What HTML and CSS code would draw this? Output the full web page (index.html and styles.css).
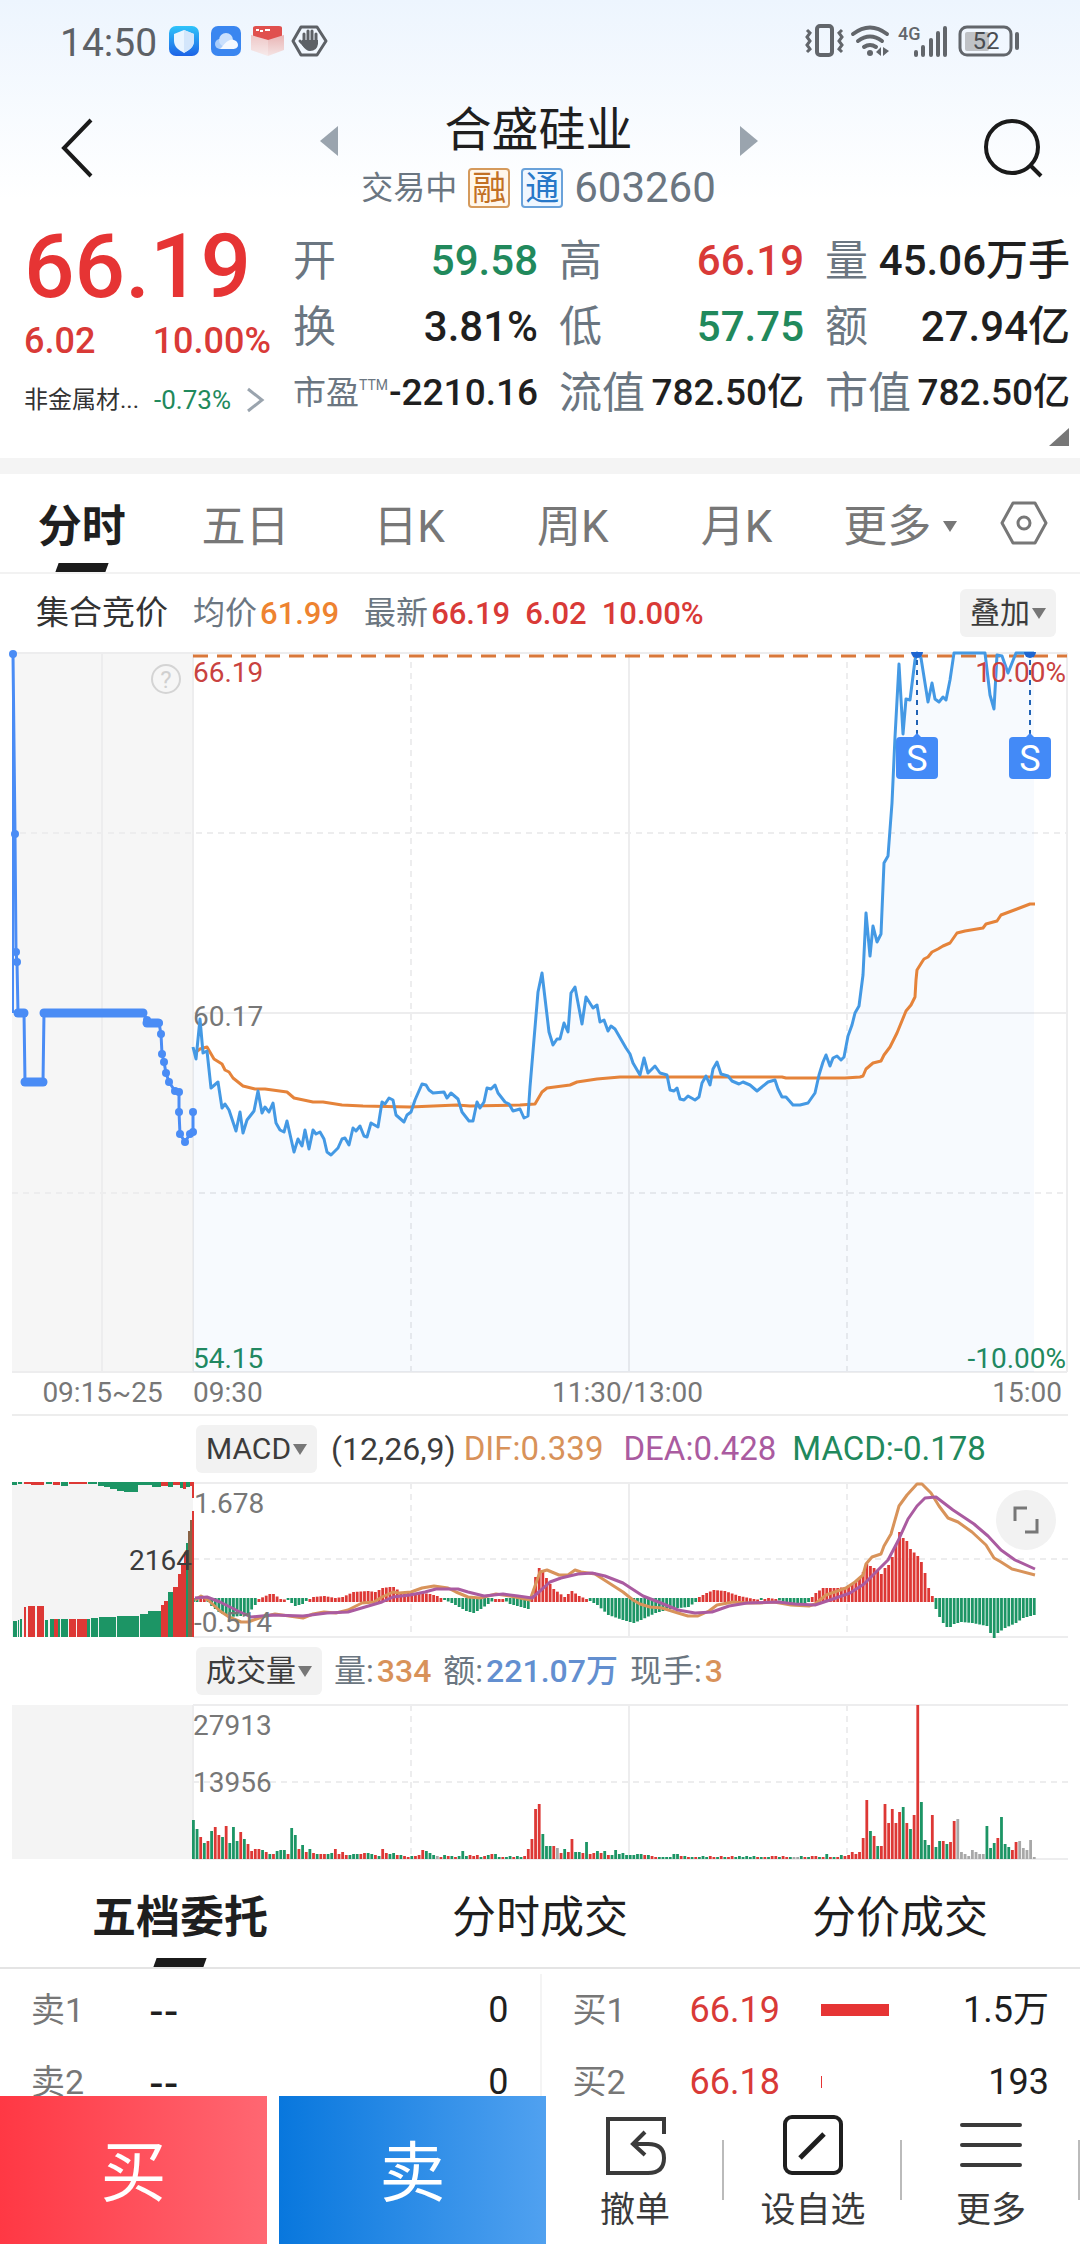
FILE: index.html
```html
<!DOCTYPE html>
<html lang="zh-CN">
<head>
  <meta charset="UTF-8">
  <meta name="viewport" content="width=device-width, initial-scale=1">
  <title>合盛硅业 603260</title>
  <link rel="stylesheet" href="styles.css">
</head>
<body>
<div class="page">

  <div class="top">
    <div class="status-bar">
      <span class="clock">14:50</span>
      <svg width="160" height="34" viewBox="0 0 160 34" aria-hidden="true">
        <defs>
          <linearGradient id="shieldBg" x1="0" y1="0" x2="0" y2="1"><stop offset="0" stop-color="#2fc4fa"/><stop offset="1" stop-color="#1d63e6"/></linearGradient>
          <linearGradient id="boxBg" x1="0" y1="0" x2="0" y2="1"><stop offset="0" stop-color="#e9b4b4"/><stop offset="1" stop-color="#f4e4e4"/></linearGradient>
        </defs>
        <rect x="0" y="2" width="30" height="30" rx="7" fill="url(#shieldBg)"/>
        <path d="M15 6 L25 10 V17 C25 23 20 26 15 29 C10 26 5 23 5 17 V10 Z" fill="#eaf5ff"/>
        <path d="M15 6 L25 10 V17 C25 23 20 26 15 29 Z" fill="#d3e6fb"/>
        <rect x="42" y="2" width="30" height="30" rx="7" fill="#3a86f0"/>
        <circle cx="51" cy="20" r="5" fill="#a9cdfb"/>
        <circle cx="57" cy="16" r="7" fill="#c9e0fd"/>
        <path d="M50 25 C53 25 55 18 61 16 C66 15 69 18 69 21 C69 24 66 25 64 25 Z" fill="#f4f9ff"/>
        <path d="M84 4 Q84 2 87 2 H110 Q113 2 113 4 V16 H84 Z" fill="#e0504e"/>
        <path d="M87 6 h3 M91 7 h3 M96 6 h5" stroke="#fff" stroke-width="2"/>
        <path d="M82 11 L99 16 L115 11 V26 L99 32 L82 26 Z" fill="url(#boxBg)"/>
        <path d="M82 11 L99 16 V32 L82 26 Z" fill="#fff" opacity="0.25"/>
        <path d="M132 3 H148 L157 17 L148 31 H132 L124 17 Z" fill="none" stroke="#5d6166" stroke-width="3" stroke-linejoin="round"/>
        <path d="M135 17 V10 M139 17 V7 M143 17 V7 M147 17 V10 M131 17 L136 22" stroke="#5d6166" stroke-width="3" stroke-linecap="round"/>
        <path d="M133 16 H149 V20 Q148 27 141 27 Q137 27 133 21 Z" fill="#5d6166"/>
      </svg>
      <svg class="status-right" width="216" height="36" viewBox="0 0 216 36" aria-hidden="true">
        <g fill="none" stroke="#62666b">
          <rect x="13" y="3" width="15" height="29" rx="3" stroke-width="4"/>
          <path d="M3 7 l3 3 -3 4 3 4 -3 4 3 4 -3 3 M38 7 l-3 3 3 4 -3 4 3 4 -3 4 3 3" stroke-width="3"/>
          <path d="M49 11 Q66 -2 83 11 M54 18 Q66 9 78 18 M60 24 Q66 20 72 24" stroke-width="4" stroke-linecap="round"/>
          <path d="M112 29 V32 M119 24 V32 M127 17 V32 M134 10 V32 M141 5 V32" stroke-width="4" stroke-linecap="round"/>
          <rect x="156" y="4" width="51" height="28" rx="7" stroke-width="3"/>
          <path d="M213 11 V25" stroke-width="4" stroke-linecap="round"/>
        </g>
        <circle cx="66" cy="30" r="3" fill="#62666b"/>
        <path d="M72 29 l5 -5 v9 M79 24 l6 4 -6 5 Z" fill="#62666b"/>
        <rect x="161" y="9" width="24" height="19" rx="2" fill="#bfc2c6"/>
        <text class="net" x="94" y="17">4G</text>
        <text class="battery" x="182" y="26">52</text>
      </svg>
    </div>

    <header class="header">
      <button class="icon-btn" aria-label="返回">
        <svg width="34" height="60" viewBox="0 0 34 60"><path d="M31 2 L4 30 L31 58" fill="none" stroke="#1a1a1a" stroke-width="4"/></svg>
      </button>
      <div class="stock">
        <button class="icon-btn" aria-label="上一只"><svg width="18" height="30" viewBox="0 0 18 30"><path d="M18 0 V30 L0 15 Z" fill="#9aa4ae"/></svg></button>
        <div class="stock-name">
          <h1>合盛硅业</h1>
          <div class="stock-sub">
            <span>交易中</span>
            <span class="badge badge-orange">融</span>
            <span class="badge badge-blue">通</span>
            <span class="code">603260</span>
          </div>
        </div>
        <button class="icon-btn" aria-label="下一只"><svg width="18" height="30" viewBox="0 0 18 30"><path d="M0 0 V30 L18 15 Z" fill="#9aa4ae"/></svg></button>
      </div>
      <button class="icon-btn" aria-label="搜索">
        <svg width="62" height="62" viewBox="0 0 62 62"><circle cx="29" cy="29" r="26" fill="none" stroke="#1a1a1a" stroke-width="4"/><path d="M47 47 L58 58" stroke="#1a1a1a" stroke-width="4"/></svg>
      </button>
    </header>
  </div>

  <section class="quote">
    <div class="quote-main">
      <div class="price">66.19</div>
      <div class="change"><span>6.02</span><span>10.00%</span></div>
      <a class="sector" href="#sector">
        <span>非金属材...</span>
        <span class="sector-change green">-0.73%</span>
        <svg width="18" height="26" viewBox="0 0 18 26"><path d="M2 2 L16 13 L2 24" fill="none" stroke="#9aa4ae" stroke-width="3"/></svg>
      </a>
    </div>
    <dl class="quote-grid">
      <div class="cell"><dt>开</dt><dd class="green">59.58</dd></div>
      <div class="cell"><dt>高</dt><dd class="red">66.19</dd></div>
      <div class="cell"><dt>量</dt><dd>45.06万手</dd></div>
      <div class="cell"><dt>换</dt><dd>3.81%</dd></div>
      <div class="cell"><dt>低</dt><dd class="green">57.75</dd></div>
      <div class="cell"><dt>额</dt><dd>27.94亿</dd></div>
      <div class="cell small"><dt class="ttm">市盈<sup>TTM</sup></dt><dd>-2210.16</dd></div>
      <div class="cell small"><dt>流值</dt><dd>782.50亿</dd></div>
      <div class="cell small"><dt>市值</dt><dd>782.50亿</dd></div>
    </dl>
    <svg class="expand-corner" width="20" height="18" viewBox="0 0 20 18"><path d="M20 0 V18 H0 Z" fill="#777"/></svg>
  </section>

  <nav class="periods">
    <button class="period active">分时</button>
    <button class="period">五日</button>
    <button class="period">日K</button>
    <button class="period">周K</button>
    <button class="period">月K</button>
    <button class="period">更多<i class="caret"></i></button>
    <button class="gear" aria-label="设置">
      <svg width="50" height="44" viewBox="0 0 50 44"><path d="M14 2 H36 L47 22 L36 42 H14 L3 22 Z" fill="none" stroke="#777" stroke-width="3" stroke-linejoin="round"/><circle cx="25" cy="22" r="6" fill="none" stroke="#777" stroke-width="3"/></svg>
    </button>
  </nav>

  <div class="info">
    <span class="auction">集合竞价</span>
    <span class="info-item">均价<b class="orange">61.99</b></span>
    <span class="info-item">最新<b class="red">66.19</b><b class="red">6.02</b><b class="red">10.00%</b></span>
    <button class="tag">叠加<i class="caret"></i></button>
  </div>

  <svg class="chart" id="priceChart" viewBox="0 0 1080 721">
    <rect x="12" y="1" width="181" height="720" fill="#f6f6f6"/>
    <g class="grid">
      <path d="M12 1 H1067 M193 361 H1067 M12 720 H1067 M102 1 V720 M193 1 V720 M629 1 V720 M1067 1 V720"/>
      <path class="dash" d="M20 181 H1067 M12 541 H1067 M411 10 V720 M847 10 V720"/>
    </g>
    <polyline class="limit" points="193,4 1067,4"/>
    <text class="axis red-text" x="193" y="30">66.19</text>
    <text class="axis" x="193" y="374">60.17</text>
    <text class="axis green-text" x="193" y="716">54.15</text>
    <text class="axis green-text" x="1066" y="716" text-anchor="end">-10.00%</text>
    <circle cx="166" cy="27" r="14" fill="none" stroke="#d4d4d4" stroke-width="2"/>
    <text class="help" x="166" y="36" text-anchor="middle">?</text>
  </svg>
  <div class="times">
    <span class="time-auction">09:15~25</span>
    <div class="time-day">
      <span>09:30</span>
      <span>11:30/13:00</span>
      <span>15:00</span>
    </div>
  </div>

  <div class="indicator">
    <button class="tag">MACD<i class="caret"></i></button>
    <span class="params">(12,26,9)</span>
    <span class="value dif">DIF:0.339</span>
    <span class="value dea">DEA:0.428</span>
    <span class="value green">MACD:-0.178</span>
  </div>
  <div class="chart-wrap">
    <svg class="chart" id="macdChart" viewBox="0 0 1080 156">
      <rect x="12" y="0" width="181" height="155" fill="#f4f4f4"/>
      <g class="grid">
        <path d="M12 1 H1068 M193 155 H1068 M629 1 V155"/>
        <path class="dash" d="M193 77 H1068 M411 1 V155 M847 1 V155"/>
      </g>
    </svg>
    <button class="fullscreen" aria-label="全屏">
      <svg width="26" height="28" viewBox="0 0 26 28"><path d="M2 15 V2 H14 M24 13 V26 H12" fill="none" stroke="#777" stroke-width="3"/></svg>
    </button>
  </div>

  <div class="indicator volume-row">
    <button class="tag">成交量<i class="caret"></i></button>
    <span>量:<b class="dif">334</b></span>
    <span>额:<b class="blue">221.07万</b></span>
    <span>现手:<b class="dif">3</b></span>
  </div>
  <svg class="chart" id="volumeChart" viewBox="0 0 1080 156">
    <rect x="12" y="1" width="181" height="154" fill="#f4f4f4"/>
    <g class="grid">
      <path d="M193 1 H1068 M193 155 H1068 M193 1 V155 M629 1 V155"/>
      <path class="dash" d="M193 78 H1068 M411 1 V155 M847 1 V155"/>
    </g>
    <text class="axis" x="193" y="31">27913</text>
    <text class="axis" x="193" y="88">13956</text>
  </svg>

  <nav class="deal-tabs">
    <button class="deal-tab active">五档委托</button>
    <button class="deal-tab">分时成交</button>
    <button class="deal-tab">分价成交</button>
  </nav>

  <div class="orders">
    <table class="sell-orders">
      <tr><th scope="row">卖1</th><td class="order-price empty">--</td><td class="order-count">0</td></tr>
      <tr><th scope="row">卖2</th><td class="order-price empty">--</td><td class="order-count">0</td></tr>
    </table>
    <table class="buy-orders">
      <tr><th scope="row">买1</th><td class="order-price red">66.19</td><td><div class="depth" style="width: 68px"></div></td><td class="order-count">1.5万</td></tr>
      <tr><th scope="row">买2</th><td class="order-price red">66.18</td><td><div class="depth" style="width: 1px"></div></td><td class="order-count">193</td></tr>
    </table>
  </div>

  <footer class="actions">
    <button class="trade buy">买</button>
    <button class="trade sell">卖</button>
    <div class="tools">
      <button class="tool">
        <svg width="62" height="62" viewBox="0 0 62 62"><path d="M60 20 V5 H4 V59 H44 Q60 59 60 44 Q60 30 44 30 H29 M41 18 L29 30 L41 41" fill="none" stroke="#3a3a3a" stroke-width="4"/></svg>
        撤单
      </button>
      <button class="tool">
        <svg width="62" height="62" viewBox="0 0 62 62"><rect x="3" y="3" width="56" height="56" rx="7" fill="none" stroke="#1f1f1f" stroke-width="4"/><path d="M18 44 L42 20" stroke="#1f1f1f" stroke-width="5"/></svg>
        设自选
      </button>
      <button class="tool">
        <svg width="62" height="62" viewBox="0 0 62 62"><path d="M2 11 H60 M2 31 H60 M2 51 H60" stroke="#3a3a3a" stroke-width="4" stroke-linecap="round"/></svg>
        更多
      </button>
    </div>
  </footer>

</div>

<script>
  const NS = 'http://www.w3.org/2000/svg';
  const RED = '#dd3835';
  const GREEN = '#1c9565';
  const GRAY = '#a8a8a8';
  const LEFT = 193;      // x of 09:30
  const STEP = 3.64;     // width of one minute

  function add(svg, tag, attrs, text) {
    const el = document.createElementNS(NS, tag);
    for (const key in attrs) el.setAttribute(key, attrs[key]);
    if (text) el.textContent = text;
    svg.appendChild(el);
    return el;
  }

  function line(svg, points, color, width) {
    return add(svg, 'polyline', { points, fill: 'none', stroke: color, 'stroke-width': width, 'stroke-linejoin': 'round' });
  }

  // ---- price ----
  const priceChart = document.getElementById('priceChart');
  const auction = '13,2 15,182 16,300 17,310 18,361 24,361 25,430 43,430 44,361 143,361 147,368 159,371 161,382 162,402 164,410 166,421 169,430 175,439 179,440 179,460 180,482 185,490 190,482 193,480 193,460';
  const price = '193,395 196,407 200,367 203,401 207,399 211,436 218,430 222,456 225,452 229,458 236,479 240,460 243,481 247,468 254,459 258,439 262,461 265,455 269,460 273,451 276,471 280,478 284,480 287,469 294,500 298,487 302,494 305,478 309,497 313,478 316,482 320,480 324,487 327,500 331,503 338,496 342,487 345,486 349,493 353,476 356,479 360,474 364,484 367,485 371,471 378,475 382,450 385,452 389,446 393,448 396,463 404,470 407,463 411,460 415,448 422,432 426,433 429,438 433,441 444,440 447,446 451,441 458,447 462,460 469,469 473,469 477,450 480,456 484,450 487,436 491,437 495,433 498,441 505,450 509,452 513,459 520,457 524,466 528,464 530,435 538,340 542,321 549,380 553,393 557,387 560,387 564,371 568,380 571,341 575,335 582,372 586,345 593,356 597,353 600,370 604,368 608,379 611,374 615,377 626,396 630,402 633,411 640,423 644,406 648,421 655,414 660,421 667,423 670,438 674,439 677,436 680,447 684,448 688,444 695,448 699,445 702,431 706,424 710,433 713,417 717,410 721,422 728,424 732,429 739,432 743,430 750,433 757,439 768,430 775,428 778,437 782,445 786,445 793,453 800,453 808,451 815,441 819,423 823,410 826,403 830,414 833,406 837,404 841,408 844,405 848,384 852,373 855,361 859,354 863,323 866,261 870,304 873,274 877,290 881,282 884,211 888,204 892,151 895,85 899,12 903,82 906,47 910,48 915,8 917,1 921,6 928,50 932,31 935,47 939,50 943,45 946,48 950,28 954,1 985,1 990,43 994,57 997,3 1002,4 1008,21 1016,1 1034,1';
  const average = '196,400 200,397 207,395 214,407 222,412 225,418 229,420 233,426 243,434 255,437 265,437 287,440 294,446 313,450 323,450 342,453 363,454 410,455 457,453 470,454 520,453 535,452 542,440 547,436 570,433 577,430 597,427 620,425 650,425 782,425 786,426 845,426 860,425 863,424 866,417 873,411 881,409 884,403 890,395 897,381 906,359 911,353 915,345 916,328 917,318 922,310 924,307 928,305 932,300 938,297 943,294 950,291 957,281 965,279 983,276 986,272 997,269 1001,263 1017,257 1030,252 1035,252';

  add(priceChart, 'polygon', { points: price + ' 1034,720 193,720', fill: '#2a8ae6', 'fill-opacity': 0.04 });
  line(priceChart, '13,2 13,361', '#4a8cf5', 2);
  line(priceChart, auction, '#4a8cf5', 3);
  auction.split(' ').forEach(p => {
    const [cx, cy] = p.split(',');
    add(priceChart, 'circle', { cx, cy, r: 4, fill: '#4a8cf5' });
  });
  [[18, 24, 361], [25, 43, 430], [44, 143, 361], [147, 158, 371]].forEach(([x1, x2, y]) => {
    line(priceChart, `${x1},${y} ${x2},${y}`, '#4a8cf5', 9).setAttribute('stroke-linecap', 'round');
  });
  line(priceChart, average, '#e5833a', 3);
  line(priceChart, price, '#4499e4', 3);

  // sell marks
  [917, 1030].forEach(x => {
    add(priceChart, 'path', { d: `M${x - 6} 0 a6 6 0 0 0 12 0 Z`, fill: '#1f66d0' });
    add(priceChart, 'path', { d: `M${x} 8 V82`, stroke: '#2163b5', 'stroke-width': 2, 'stroke-dasharray': '5 5' });
    add(priceChart, 'path', { d: `M${x - 5} 86 l5 -5 l5 5 Z`, fill: '#438af7' });
    add(priceChart, 'rect', { x: x - 21, y: 85, width: 42, height: 42, rx: 4, fill: '#438af7' });
    add(priceChart, 'text', { x, y: 119, class: 'mark', 'text-anchor': 'middle' }, 'S');
  });
  add(priceChart, 'text', { x: 1066, y: 30, class: 'axis red-text', 'text-anchor': 'end' }, '10.00%');

  // ---- MACD ----
  const macdChart = document.getElementById('macdChart');
  const ZERO = 118;
  // [minute, height] knots of the histogram
  const macd = [[0,-2],[1,-2],[2,2],[3,2],[4,-2],[5,-6],[7,-12],[10,-17],[13,-16],[15,-14],[17,-5],[18,1],[21,6],[22,6],[24,1],[26,0],[28,-6],[30,-4],[31,-1],[33,3],[36,4],[39,2],[41,3],[44,8],[48,9],[50,8],[52,12],[54,13],[55,13],[57,8],[60,7],[63,7],[65,6],[67,4],[69,0],[71,-3],[75,-11],[77,-13],[79,-9],[81,-4],[83,1],[85,1],[87,-4],[90,-7],[92,-9],[93,3],[94,23],[95,32],[96,28],[98,16],[99,11],[102,3],[104,9],[106,4],[108,1],[109,-1],[111,-5],[114,-15],[118,-20],[121,-23],[123,-20],[127,-13],[131,-9],[136,-7],[138,-2],[139,3],[141,7],[143,10],[146,9],[150,4],[154,1],[156,0],[158,2],[160,1],[162,-2],[166,-6],[169,-2],[170,3],[171,7],[173,12],[177,12],[179,13],[181,16],[183,22],[184,28],[185,36],[187,32],[189,26],[190,32],[191,35],[192,43],[193,55],[194,68],[195,62],[196,59],[197,51],[199,44],[200,38],[201,27],[202,12],[203,4],[204,-9],[205,-17],[206,-23],[207,-27],[208,-27],[209,-24],[211,-22],[214,-23],[218,-26],[219,-33],[220,-38],[221,-33],[223,-28],[226,-23],[228,-18],[230,-16],[231,-15]];
  for (let k = 0; k < macd.length; k++) {
    const [start, from] = macd[k];
    const [end, to] = macd[k + 1] || [start + 1, from];
    for (let i = start; i < end; i++) {
      const v = from + (to - from) * (i - start) / (end - start);
      const up = v > 0;
      add(macdChart, 'rect', {
        x: LEFT + i * STEP - 1, width: 2.8,
        y: up ? ZERO - v : ZERO - 2, height: Math.abs(v) + 2,
        fill: up ? RED : GREEN
      });
    }
  }

  // call auction bars: [x1, x2, height, color], first from the top, then from the bottom
  const auctionTop = [[12,17,3,GREEN],[18,22,2,GREEN],[24,31,2,RED],[31,44,3,RED],[46,52,2,GREEN],[53,60,3,RED],[61,68,4,GREEN],[69,87,2,RED],[88,97,2,GREEN],[98,104,4,GREEN],[104,110,5,GREEN],[110,117,7,GREEN],[117,124,9,GREEN],[124,138,10,GREEN],[138,152,3,GREEN],[152,161,5,GREEN],[161,168,4,RED],[168,173,5,GREEN],[173,180,3,RED],[180,183,6,GREEN],[183,186,7,RED],[186,190,5,GREEN],[190,192,4,RED],[192,194,16,RED]];
  const auctionBottom = [[13,17,16,GREEN],[18,19,17,GREEN],[20,22,18,GREEN],[24,26,30,RED],[28,35,31,RED],[37,44,31,RED],[45,48,17,GREEN],[50,54,18,GREEN],[54,58,18,RED],[58,60,18,GREEN],[61,68,18,GREEN],[69,76,18,RED],[77,87,18,RED],[87,90,18,GREEN],[91,98,19,GREEN],[99,116,20,GREEN],[117,139,21,GREEN],[140,148,23,GREEN],[148,161,26,GREEN],[161,164,32,RED],[164,168,36,RED],[168,173,45,GREEN],[173,178,50,RED],[178,181,63,RED],[181,184,72,RED],[184,186,85,RED],[186,188,94,GREEN],[188,190,106,'#8a6245'],[190,192,117,'#8a6245'],[192,194,126,RED]];
  auctionTop.forEach(([x1, x2, h, fill]) => add(macdChart, 'rect', { x: x1, y: 0, width: x2 - x1, height: h, fill }));
  auctionBottom.forEach(([x1, x2, h, fill]) => add(macdChart, 'rect', { x: x1, y: 155 - h, width: x2 - x1, height: h, fill }));

  line(macdChart, '195,118 201,114 208,118 220,129 229,135 241,140 248,140 262,135 275,132 289,134 303,136 313,132 324,130 336,131 348,128 362,121 374,120 382,115 393,110 399,111 411,110 422,106 434,104 448,106 456,110 468,115 480,116 496,112 510,114 530,118 535,104 540,90 547,88 559,93 568,93 575,88 581,90 595,92 609,101 623,110 633,118 640,122 650,125 662,126 678,131 688,134 698,134 709,129 717,123 733,120 747,121 760,121 774,120 791,123 809,124 815,122 826,113 846,106 855,100 863,93 866,82 872,75 881,72 884,64 891,52 899,24 907,13 917,2 922,2 931,11 939,24 948,36 958,40 972,50 986,63 994,76 1001,80 1012,87 1035,93', '#d8935a', 3);
  line(macdChart, '195,116 207,115 220,120 238,129 251,135 272,133 303,134 327,131 348,130 365,125 382,120 393,115 410,113 425,110 436,107 458,107 468,110 484,114 503,112 518,114 532,116 540,109 550,100 561,96 578,92 592,91 605,94 623,101 643,114 661,121 678,128 695,131 712,130 729,124 747,121 778,120 795,122 815,123 833,117 850,111 864,102 876,90 888,78 898,59 908,37 917,24 925,16 936,15 953,28 974,42 988,54 1001,68 1015,78 1035,87', '#aa5ba0', 3);
  add(macdChart, 'text', { x: 194, y: 31, class: 'axis' }, '1.678');
  add(macdChart, 'text', { x: 194, y: 150, class: 'axis' }, '-0.514');
  add(macdChart, 'text', { x: 192, y: 88, class: 'axis dark-text', 'text-anchor': 'end' }, '2164');

  // ---- volume: height + r/g/x (up, down, flat) for every minute ----
  const volumeChart = document.getElementById('volumeChart');
  const volume = ('39g 30g 22r 16g 18r 28g 32r 24r 22g 33r 16g 32g 18g 27r 20g 15r 8r 10r 10r 9g 7r 5g 5r 8g 9g 9g 5r 31g 24g 10r 14g 7r 10g 6r 5g 5r 5r 5g 6g 10r ' +
    '5r 7r 4r 4g 5g 5g 5r 6r 6g 5g 4r 3g 10r 6r 5g 6g 4r 4g 3r 2r 3g 3r 4r 9r 8g 6g 4g 3x 2r 4g 3r 3g 2r 3g 8g 3g 4r 3r 4r 2g 3r 4g 5r 5g 2g 2r 2g 3g 2r 3g 2g 3r ' +
    '10r 20r 50r 55r 25g 13g 13g 13r 11x 6r 10g 7r 20r 7g 7g 6r 17g 5r 6r 8g 6r 8g 4r 4g 9g 5g 6g 4g 4g 4g 5g 5g 4r 4g 3r 2r 2g 2g 2g 2g 5g 5g 3r 3g 2r 2g 2r 2g 3g 2g ' +
    '3r 2r 2g 3r 2g 2r 3r 2g 3g 2g 3g 2g 3g 2r 2g 2r 2g 3r 3r 2g 3r 2r 2g 2x 2x 3g 2r 2g 3r 3r 2g 2r 5g 2r 2g 2r 4g 3r 4r 7r 5r 7r 21r 59r 28g 23r 13g 13r 55r 36r 50r 36r 47r 52g ' +
    '36r 30g 44r 154r 57g 19g 14g 44r 12g 18g 18r 15g 17r 38r 40x 7x 5x 3x 9x 7x 5x 5x 33g 11g 16g 21r 42g 15g 12g 9r 17r 18x 11x 9x 19x 2x').split(' ');
  const colors = { r: RED, g: GREEN, x: GRAY };
  volume.forEach((item, i) => {
    const h = parseInt(item);
    add(volumeChart, 'rect', { x: LEFT + i * STEP - 1, y: 155 - h, width: 2.8, height: h, fill: colors[item.slice(-1)] });
  });
</script>
</body>
</html>
```
FILE: styles.css
```css
* {
  box-sizing: border-box;
}

body {
  margin: 0;
  background: #fff;
  color: #1f1f1f;
  font-family: Roboto, "Noto Sans CJK SC", sans-serif;
}

button {
  margin: 0;
  padding: 0;
  border: 0;
  background: none;
  color: inherit;
  font: inherit;
}

svg {
  display: block;
  overflow: visible;
}

.page {
  display: flex;
  flex-direction: column;
  height: 100vh;
  overflow: hidden;
}

.page > * {
  flex-shrink: 0;
}

.red { color: #d93a37; }
.green { color: #21895c; }
.orange { color: #ee8330; }
.blue { color: #638fd0; }
.dif { color: #d8925a; }
.dea { color: #aa5ba0; }

.caret {
  display: inline-block;
  border: 7px solid transparent;
  border-top: 11px solid #777;
  border-bottom: 0;
}

/* status bar + header */
.top {
  height: 222px;
  background: linear-gradient(#edf5fe, #fff 90%);
}

.status-bar {
  display: flex;
  align-items: center;
  gap: 12px;
  height: 82px;
  padding: 0 60px;
}

.clock {
  font-size: 39px;
  line-height: 44px;
  color: #5d6166;
  padding-top: 4px;
}

.status-right {
  margin-left: auto;
}

.net {
  font-size: 18px;
  font-weight: 500;
  fill: #62666b;
}

.battery {
  font-size: 24px;
  fill: #4a4d51;
  text-anchor: middle;
}

.header {
  display: flex;
  justify-content: space-between;
  align-items: flex-start;
  padding: 18px 35px 0 60px;
}

.header > .icon-btn {
  padding-top: 18px;
}

.stock {
  display: flex;
  align-items: flex-start;
  gap: 23px;
}

.stock > .icon-btn {
  padding-top: 26px;
}

.stock-name {
  width: 356px;
  text-align: center;
}

h1 {
  margin: 0;
  font-size: 47px;
  font-weight: 400;
  line-height: 60px;
}

.stock-sub {
  display: flex;
  justify-content: center;
  align-items: center;
  gap: 11px;
  height: 56px;
  font-size: 32px;
  line-height: 40px;
  color: #6b7681;
  white-space: nowrap;
}

.badge {
  width: 42px;
  height: 40px;
  border: 2px solid;
  border-radius: 4px;
  font-size: 34px;
  line-height: 36px;
}

.badge-orange {
  border-color: #d59a5c;
  background: #fff7ec;
  color: #c27024;
}

.badge-blue {
  border-color: #6aa2da;
  background: #f0f7ff;
  color: #2878c8;
}

.code {
  font-size: 42px;
}

/* quote */
.quote {
  position: relative;
  display: flex;
  gap: 22px;
  height: 252px;
  padding: 0 10px 0 24px;
  border-bottom: 16px solid #f4f4f4;
}

.quote-main {
  width: 247px;
}

.price {
  font-size: 89px;
  font-weight: 500;
  line-height: 90px;
  color: #e63434;
}

.change {
  display: flex;
  justify-content: space-between;
  font-size: 36px;
  font-weight: 500;
  line-height: 58px;
  color: #d93a37;
  white-space: nowrap;
}

.sector {
  display: flex;
  justify-content: space-between;
  align-items: center;
  height: 60px;
  padding-right: 7px;
  font-size: 24px;
  line-height: 60px;
  color: #333;
  text-decoration: none;
  white-space: nowrap;
}

.sector-change {
  font-size: 26px;
}

.quote-grid {
  flex: 1;
  display: grid;
  grid-template-columns: repeat(3, 1fr);
  grid-auto-rows: 66px;
  column-gap: 21px;
  margin: 0;
  padding-top: 6px;
}

.cell {
  display: flex;
  justify-content: space-between;
  align-items: center;
  min-width: 0;
  white-space: nowrap;
}

.cell dt {
  font-size: 43px;
  line-height: 66px;
  color: #6b7681;
}

.cell dd {
  margin: 0;
  font-size: 42px;
  font-weight: 500;
  line-height: 66px;
}

.cell.small dd {
  font-size: 37px;
}

.cell dt.ttm {
  font-size: 33px;
}

.ttm sup {
  font-size: 14px;
  line-height: 14px;
  vertical-align: 14px;
}

.expand-corner {
  position: absolute;
  right: 11px;
  bottom: 12px;
}

/* period tabs */
.periods {
  display: flex;
  align-items: stretch;
  height: 100px;
  padding-right: 14px;
  border-bottom: 2px solid #f2f2f2;
}

.period {
  flex: 1;
  position: relative;
  font-size: 44px;
  color: #777;
  white-space: nowrap;
}

.period .caret {
  margin-left: 12px;
  vertical-align: 10px;
}

.active {
  font-weight: 700;
  color: #1f1f1f;
}

.active::after {
  content: "";
  position: absolute;
  left: 50%;
  bottom: 0;
  width: 50px;
  height: 9px;
  margin-left: -25px;
  background: #1b1b1b;
  transform: skewX(-20deg);
}

.gear {
  width: 84px;
}

.gear svg {
  margin: 0 auto;
}

/* info line */
.info {
  display: flex;
  align-items: center;
  height: 78px;
  padding: 0 24px 0 36px;
  font-size: 32px;
  line-height: 48px;
  color: #6b7681;
  white-space: nowrap;
}

.info b {
  margin-right: 15px;
  font-size: 31px;
  font-weight: 500;
}

.info-item {
  margin-right: 10px;
}

.info-item b:first-child {
  margin-left: 3px;
}

.auction {
  margin-right: 25px;
  font-size: 33px;
  color: #333;
}

.tag {
  height: 48px;
  padding: 0 10px;
  border-radius: 6px;
  background: #f2f2f2;
  font-size: 30px;
  line-height: 48px;
  color: #3c3c3c;
  white-space: nowrap;
}

.tag .caret {
  margin-left: 2px;
  vertical-align: 4px;
}

.info .tag {
  margin-left: auto;
}

/* charts */
.chart {
  width: 100%;
  height: auto;
}

.grid path {
  fill: none;
  stroke: #ededee;
  stroke-width: 2;
}

.grid .dash {
  stroke-dasharray: 6 5;
}

.limit {
  stroke: #d9783a;
  stroke-width: 3;
  stroke-dasharray: 15 9;
}

.axis {
  font-size: 28px;
  fill: #777;
}

.red-text { fill: #c94240; }
.green-text { fill: #21895c; }
.dark-text { fill: #3c3c3c; }

.help {
  font-size: 24px;
  fill: #d0d0d0;
}

.mark {
  font-size: 36px;
  fill: #fff;
}

.times {
  display: flex;
  height: 43px;
  margin: 0 12px;
  border-bottom: 2px solid #ededed;
  font-size: 28px;
  line-height: 40px;
  color: #777;
}

.time-auction {
  width: 181px;
  text-align: center;
}

.time-day {
  flex: 1;
  display: flex;
  justify-content: space-between;
  padding-right: 6px;
}

.indicator {
  display: flex;
  align-items: center;
  height: 66px;
  padding-left: 196px;
  font-size: 32px;
  line-height: 48px;
  white-space: nowrap;
}

.params {
  margin: 0 8px 0 14px;
  color: #3c3c3c;
}

.value {
  font-size: 33px;
}

.dif + .dea {
  margin: 0 16px 0 20px;
}

.volume-row {
  gap: 12px;
  color: #6b7681;
}

.volume-row b {
  margin-left: 3px;
  font-weight: 500;
}

.chart-wrap {
  position: relative;
}

.fullscreen {
  position: absolute;
  top: 8px;
  right: 24px;
  width: 60px;
  height: 60px;
  border-radius: 50%;
  background: #f2f2f2;
}

.fullscreen svg {
  margin: 0 auto;
}

/* order book */
.deal-tabs {
  display: flex;
  height: 109px;
  border-bottom: 2px solid #e4e4e4;
}

.deal-tab {
  flex: 1;
  position: relative;
  font-size: 44px;
}

.page > .orders {
  flex: 1 1 0;
  display: flex;
  min-height: 0;
  overflow: hidden;
}

.orders table {
  flex: 1;
  table-layout: fixed;
  width: 50%;
  height: 144px;
  margin: 5px 0 0;
  border-collapse: collapse;
  font-size: 36px;
  line-height: 48px;
}

.orders tr {
  height: 72px;
}

.orders th,
.orders td {
  padding: 0;
  font-weight: 400;
  text-align: left;
}

.orders th {
  width: 149px;
  padding-left: 31px;
  font-size: 34px;
  color: #777;
}

.buy-orders {
  border-left: 2px solid #f4f4f4;
}

.buy-orders .order-price {
  width: 131px;
}

.empty {
  font-family: "Liberation Sans", Arial, sans-serif;
  font-size: 44px;
}

.orders .order-count {
  padding-right: 31px;
  text-align: right;
}

.depth {
  height: 12px;
  background: #e63434;
}

/* bottom bar */
.actions {
  display: flex;
  height: 148px;
  background: #fff;
}

.trade {
  flex: 267;
  padding-top: 8px;
  color: #fff;
  font-size: 66px;
  line-height: 96px;
}

.buy {
  margin-right: 12px;
  background: linear-gradient(90deg, #ff3844, #ff6772);
}

.sell {
  background: linear-gradient(90deg, #0877dd, #50a1f0);
}

.tools {
  flex: 534;
  display: flex;
}

.tool {
  flex: 1;
  display: flex;
  flex-direction: column;
  align-items: center;
  gap: 10px;
  padding-top: 18px;
  background: linear-gradient(#bbb, #bbb) right 44px / 2px 60px no-repeat;
  font-size: 35px;
  line-height: 50px;
  color: #3a3a3a;
}
```
